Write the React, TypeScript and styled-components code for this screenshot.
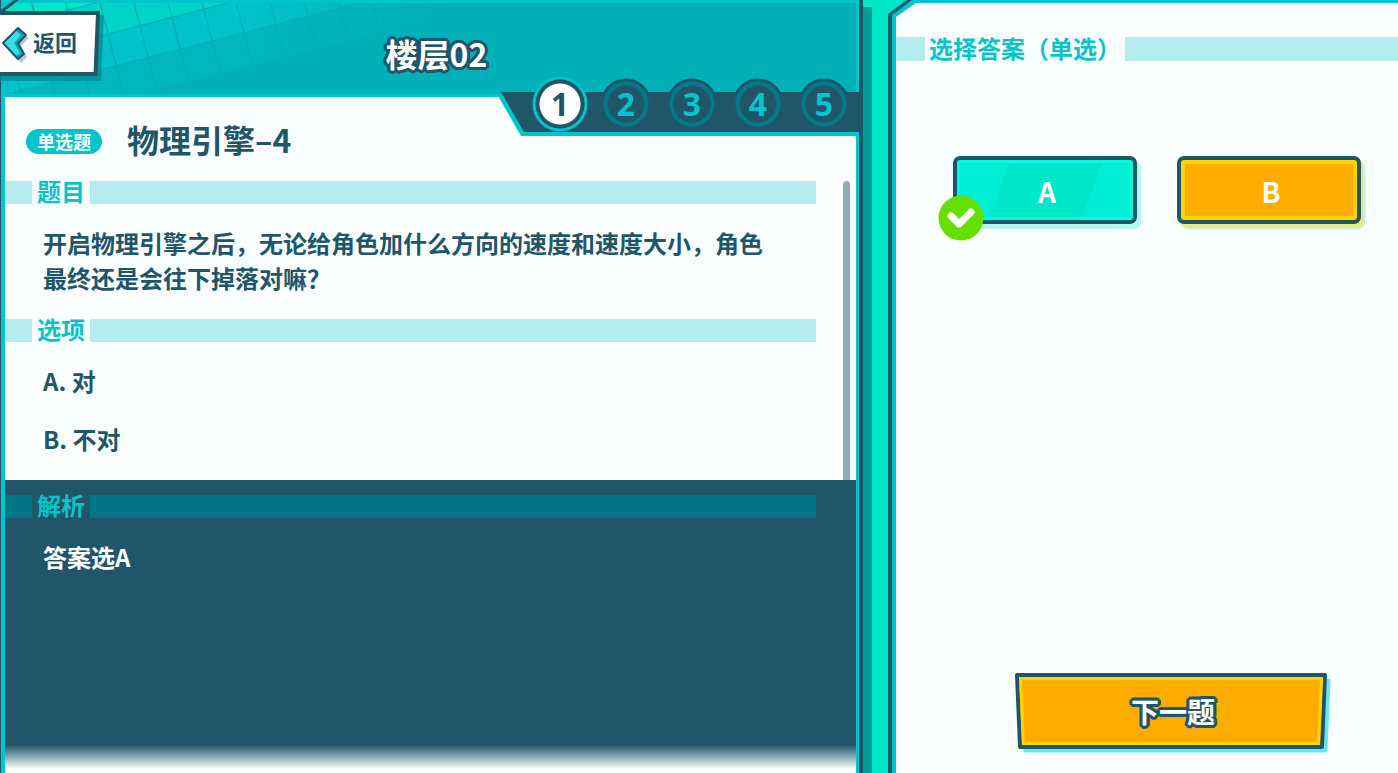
import React from "react";
import styled, { createGlobalStyle, css } from "styled-components";

const ink = "#21566a";
const cyan = "#00c5ca";
const paper = "#faffff";
const green = "#00e6c8";
const bar = "#b6ebee";

const GlobalStyle = createGlobalStyle`
  * { box-sizing: border-box; }
  body {
    margin: 0;
    background: ${green};
    color: ${ink};
    font-family: "Noto Sans CJK SC", "Noto Sans", sans-serif;
    font-weight: 700;
  }
  button { font: inherit; border: 0; background: none; padding: 0; cursor: pointer; }
  h1, h2, p, ol { margin: 0; padding: 0; font-weight: 700; }
`;

const Page = styled.div`
  display: grid;
  grid-template-columns: minmax(0, 863fr) 25px minmax(0, 510fr);
  min-height: 100vh;
`;

const QuestionPanel = styled.main`
  position: relative;
  display: flex;
  flex-direction: column;
  border-left: 1px solid ${ink};
  border-right: 4px solid ${ink};
  background: ${cyan};
  padding: 3px 3px 0 4px;
`;

const Gutter = styled.div`
  margin-top: 7px;
  border-left: 9px solid #009f9a;
`;

const Header = styled.header`
  position: relative;
  display: flex;
  align-items: center;
  justify-content: center;
  height: 91px;
  padding: 8px 0 0 12px;
  background: #02b0b7;
`;

const HeaderArt = styled.svg`
  position: absolute;
  left: -4px;
  top: -3px;
`;

const outlined = css`
  color: #fff;
  text-shadow:
    3px 0 ${ink}, -3px 0 ${ink}, 0 3px ${ink}, 0 -3px ${ink},
    2px 2px ${ink}, -2px 2px ${ink}, 2px -2px ${ink}, -2px -2px ${ink},
    3px 1px ${ink}, -3px 1px ${ink}, 3px -1px ${ink}, -3px -1px ${ink},
    1px 3px ${ink}, -1px 3px ${ink}, 1px -3px ${ink}, -1px -3px ${ink};
`;

const FloorTitle = styled.h1`
  position: relative;
  font-size: 32px;
  line-height: 40px;
  ${outlined}
`;

const BackButton = styled.button`
  position: absolute;
  left: -5px;
  top: 8px;
  display: flex;
  align-items: center;
  width: 106px;
  height: 72px;
  z-index: 2;
  color: ${ink};
`;

const BackArt = styled.svg`
  position: absolute;
  inset: 0;
`;

const BackText = styled.span`
  position: relative;
  margin: 0 0 12px 33px;
  font-size: 22px;
  line-height: 28px;
`;

const Sheet = styled.section`
  position: relative;
  flex: 1;
  display: flex;
  flex-direction: column;
  margin-top: 3px;
  background: ${paper};
`;

const Steps = styled.ol`
  position: absolute;
  right: -3px;
  top: -5px;
  display: flex;
  align-items: center;
  gap: 12px;
  height: 44px;
  padding: 0 8px 20px 36px;
  list-style: none;

  &::before, &::after {
    content: "";
    position: absolute;
    inset: 2px 0 0 0;
    background: ${cyan};
    clip-path: polygon(0 0, 100% 0, 100% 100%, 24px 100%);
  }
  &::after {
    inset: 0 -1px 4px 4px;
    background: ${ink};
    clip-path: polygon(0 0, 100% 0, 100% 100%, 23px 100%);
  }
`;

const StepItem = styled.li`
  position: relative;
  z-index: 1;
  display: flex;
`;

const Step = styled.button<{ $active?: boolean }>`
  width: 56px;
  height: 56px;
  margin: 0 -1px;
  border-radius: 50%;
  font-family: "Open Sans", "Noto Sans", sans-serif;
  font-size: 32px;
  line-height: 32px;
  color: ${(p) => (p.$active ? ink : cyan)};
  background: ${(p) =>
    p.$active
      ? `radial-gradient(circle, #fff 20px, ${ink} 21px, ${ink} 24px, ${cyan} 25px, ${cyan} 27px, transparent 28px)`
      : `radial-gradient(circle, ${ink} 18px, #007a89 19px, #007a89 22px, ${ink} 23px, ${ink} 25px, transparent 26px)`};
`;

const TitleRow = styled.div`
  display: flex;
  align-items: center;
  gap: 25px;
  height: 48px;
  margin: 20px 0 16px;
  padding-left: 21px;
`;

const Tag = styled.span`
  width: 76px;
  border-radius: 13px;
  background: ${cyan};
  color: #fff;
  font-size: 18px;
  line-height: 25px;
  text-align: center;
`;

const QuestionTitle = styled.h2`
  padding-bottom: 4px;
  font-size: 32px;
  line-height: 40px;
`;

const Scroll = styled.div`
  display: grid;
  grid-template-columns: minmax(0, 1fr) 7px;
  column-gap: 27px;
  padding-right: 6px;
`;

const Thumb = styled.div`
  border-radius: 4px 4px 0 0;
  background: #8facb7;
`;

const BarHeading = styled.h2<{ $bar?: string; $large?: boolean }>`
  display: flex;
  height: ${(p) => (p.$large ? 24 : 23)}px;
  color: ${cyan};
  font-size: 24px;
  line-height: ${(p) => (p.$large ? 22 : 20)}px;
  white-space: nowrap;

  &::before, &::after {
    content: "";
    width: ${(p) => (p.$large ? 29 : 27)}px;
    background: ${(p) => p.$bar ?? bar};
  }
  &::after {
    flex: 1;
    width: auto;
  }
  span {
    padding: 0 ${(p) => (p.$large ? 4 : 5)}px;
  }
`;

const Copy = styled.div`
  padding: 21px 40px 24px 38px;
  font-size: 24px;
  line-height: 35px;
`;

const Options = styled.ol`
  display: grid;
  gap: 23px;
  padding: 21px 38px 24px;
  list-style: none;
  font-size: 24px;
  line-height: 35px;
`;

const Analysis = styled.section`
  flex: 1;
  padding: 15px 40px 60px 0;
  color: #fff;
  background: linear-gradient(to top, ${paper} 4px, ${ink} 28px);
`;

const AnswerPanel = styled.aside`
  position: relative;
  display: flex;
  flex-direction: column;
  border-left: 4px solid ${ink};
  background: linear-gradient(${cyan} 3px, transparent 3px), linear-gradient(to right, ${cyan} 4px, ${paper} 4px);
  padding: 37px 0 19px 4px;
`;

const Corner = styled.svg`
  position: absolute;
  left: -4px;
  top: 0;
`;

const Answers = styled.div`
  display: grid;
  grid-template-columns: 1fr 1fr;
  gap: 40px;
  padding: 95px 37px 0 57px;
`;

const Answer = styled.button<{ $picked?: boolean }>`
  position: relative;
  height: 68px;
  border: 4px solid ${ink};
  border-radius: 7px;
  padding: 2px 0 0 4px;
  color: #fff;
  font-size: 28px;
  line-height: 36px;
  ${(p) =>
    p.$picked
      ? css`
          background: linear-gradient(110deg, #00eed3 27%, #00e6c8 27%, #00e6c8 74%, #00eed3 74%);
          box-shadow: inset 0 0 0 3px #00fbe1, 4px 5px 0 #b5f5ec;
        `
      : css`
          background: #ffac00;
          box-shadow: inset 0 0 0 4px #ffd400, 3px 4px 0 #f0e87e, 4px 5px 0 #b5fbf5;
        `}
`;

const Check = styled.svg`
  position: absolute;
  left: -19px;
  bottom: -21px;
`;

const Footer = styled.footer`
  display: flex;
  justify-content: center;
  margin-top: auto;
  padding-left: 52px;
`;

const NextButton = styled.button`
  position: relative;
  width: 316px;
  height: 81px;
  padding-bottom: 5px;
`;

const NextArt = styled.svg`
  position: absolute;
  inset: 0;
`;

const NextText = styled.span`
  position: relative;
  font-size: 28px;
  line-height: 36px;
  ${outlined}
`;

const columns = Array.from({ length: 18 }, (_, i) => (i - 4) * 33);

export default function App() {
  return (
    <>
      <GlobalStyle />
      <Page>
        <QuestionPanel>
          <Header>
            <HeaderArt width="480" height="94" viewBox="0 0 480 94" aria-hidden="true">
              <defs>
                <linearGradient id="fade" x1="0" x2="1" y1="0" y2="0">
                  <stop offset="0.48" stopColor="#02b0b7" stopOpacity="0" />
                  <stop offset="0.75" stopColor="#02b0b7" stopOpacity="0.5" />
                  <stop offset="1" stopColor="#02b0b7" />
                </linearGradient>
              </defs>
              <g transform="translate(107 34) rotate(-14.5)">
                <rect x="-160" y="-130" width="560" height="130" fill="#00d4c8" />
                <rect x="-160" y="-100" width="162" height="68" fill={green} />
                <rect x="-160" y="0" width="560" height="33" fill="#00c3c9" />
                <rect x="-160" y="33" width="560" height="33" fill="#01b6bd" />
                <g stroke="#02b0b7" strokeWidth="1.5">
                  {columns.map((x) => (
                    <path key={x} d={`M${x} -130V66`} />
                  ))}
                  <path d="M-160 -33H400M-160 0H400M-160 33H400" />
                </g>
              </g>
              <rect width="480" height="94" fill="url(#fade)" />
              <path d="M0 3H480V0H0Z" fill={cyan} />
              <path d="M0 0H18L0 14Z" fill={ink} />
              <path d="M0 0H13L0 10Z" fill={cyan} />
            </HeaderArt>
            <BackButton>
              <BackArt width="106" height="72" viewBox="0 0 106 72" aria-hidden="true">
                <path d="M0 4H104L101 70H0Z" fill="#008f99" fillOpacity="0.8" />
                <path d="M-4 2H98L95.500 63H-4Z" fill="#fff" stroke={ink} strokeWidth="4" />
                <path d="M6 35L21 52L27 46L21 35L29 27L24 23Z" fill="#b9c6cf" />
                <path d="M3 32L18 17L26 24L18 32.500L24 43L18 48Z" fill="#35dfe6" />
                <path d="M18 17L26 24L18 32.500L24 43L18 48L16 45L20 42L14 32L21 24L16 20Z" fill="#12a5b3" />
                <path d="M3 32L18 17L26 24L18 32.500L24 43L18 48Z" fill="none" stroke={ink} strokeWidth="2" strokeLinejoin="round" />
              </BackArt>
              <BackText>返回</BackText>
            </BackButton>
            <FloorTitle>楼层02</FloorTitle>
          </Header>
          <Sheet>
            <Steps>
              {[1, 2, 3, 4, 5].map((n) => (
                <StepItem key={n}>
                  <Step $active={n === 1} aria-current={n === 1 ? "step" : undefined}>{n}</Step>
                </StepItem>
              ))}
            </Steps>
            <TitleRow>
              <Tag>单选题</Tag>
              <QuestionTitle>物理引擎–4</QuestionTitle>
            </TitleRow>
            <Scroll>
              <div>
                <BarHeading><span>题目</span></BarHeading>
                <Copy>开启物理引擎之后，无论给角色加什么方向的速度和速度大小，角色最终还是会往下掉落对嘛？</Copy>
                <BarHeading><span>选项</span></BarHeading>
                <Options>
                  <li>A. 对</li>
                  <li>B. 不对</li>
                </Options>
              </div>
              <Thumb />
            </Scroll>
            <Analysis>
              <BarHeading $bar="#007685"><span>解析</span></BarHeading>
              <Copy>答案选A</Copy>
            </Analysis>
          </Sheet>
        </QuestionPanel>
        <Gutter />
        <AnswerPanel>
          <Corner width="28" height="20" viewBox="0 0 28 20" aria-hidden="true">
            <path d="M0 0H28V3L8 17V20H0Z" fill={cyan} />
            <path d="M0 20V0H24L4 15V20Z" fill={ink} />
            <path d="M0 0H19L0 14Z" fill={green} />
          </Corner>
          <BarHeading $large><span>选择答案（单选）</span></BarHeading>
          <Answers>
            <Answer $picked aria-pressed="true">
              A
              <Check width="46" height="46" viewBox="0 0 46 46" aria-hidden="true">
                <circle cx="23" cy="23" r="22.500" fill="#64df00" />
                <path d="M13 21L21 29L33 17" fill="none" stroke="#fff" strokeWidth="7" strokeLinecap="round" strokeLinejoin="round" />
              </Check>
            </Answer>
            <Answer aria-pressed="false">B</Answer>
          </Answers>
          <Footer>
            <NextButton>
              <NextArt width="316" height="81" viewBox="0 0 316 81" aria-hidden="true">
                <path d="M10 7H314L311 78H10Z" fill="#68e9e9" stroke="#68e9e9" strokeWidth="3" strokeLinejoin="round" />
                <path d="M2 2H310L307 74H5Z" fill="#ffac00" stroke={ink} strokeWidth="4" strokeLinejoin="round" />
                <path d="M5.500 5.500H306.500L303.500 70.500H8.500Z" fill="none" stroke="#ffd400" strokeWidth="3" />
              </NextArt>
              <NextText>下一题</NextText>
            </NextButton>
          </Footer>
        </AnswerPanel>
      </Page>
    </>
  );
}
